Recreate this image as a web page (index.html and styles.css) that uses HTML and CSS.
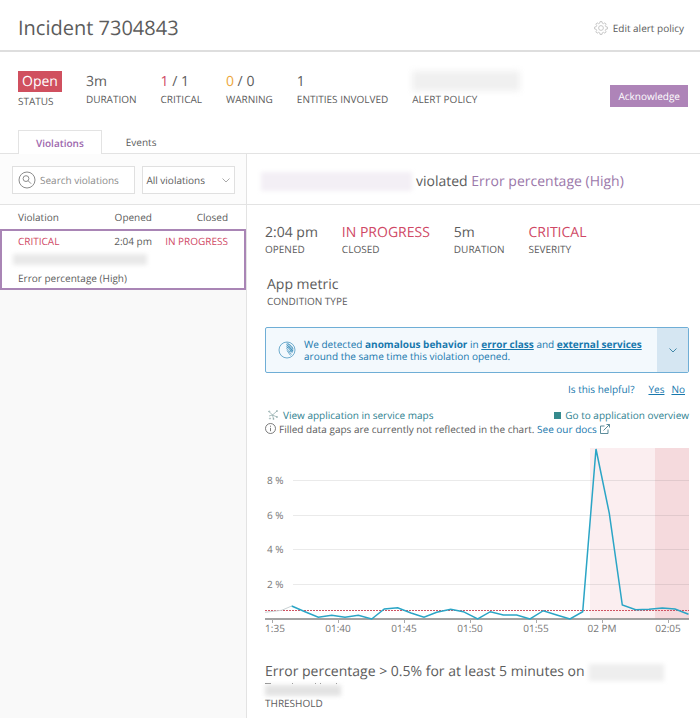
FILE: index.html
```html
<!DOCTYPE html>
<html lang="en">
<head>
<meta charset="utf-8">
<title>Incident 7304843</title>
<link rel="stylesheet" href="styles.css">
</head>
<body>
<header class="page-header">
  <h1>Incident 7304843</h1>
  <a class="edit-link" href="#">
    <svg class="gear" viewBox="0 0 14 14" aria-hidden="true"><path d="M6 .6h2l.3 1.6 1.2.5 1.4-.9 1.3 1.3-.9 1.4.5 1.2 1.6.3v2l-1.6.3-.5 1.2.9 1.4-1.3 1.3-1.4-.9-1.2.5L8 13.4H6l-.3-1.6-1.2-.5-1.4.9-1.3-1.3.9-1.4-.5-1.2L.6 8V6l1.6-.3.5-1.2-.9-1.4 1.3-1.3 1.4.9 1.2-.5z"/><circle cx="7" cy="7" r="2.4"/></svg>
    Edit alert policy
  </a>
</header>

<section class="summary">
  <dl class="stats">
    <div class="stat"><dd class="status">Open</dd><dt>STATUS</dt></div>
    <div class="stat"><dd>3m</dd><dt>DURATION</dt></div>
    <div class="stat"><dd><span class="red">1</span> / 1</dd><dt>CRITICAL</dt></div>
    <div class="stat"><dd><span class="amber">0</span> / 0</dd><dt>WARNING</dt></div>
    <div class="stat"><dd>1</dd><dt>ENTITIES INVOLVED</dt></div>
    <div class="stat"><dd><span class="redacted policy-name"></span></dd><dt>ALERT POLICY</dt></div>
  </dl>
  <button class="ack" type="button">Acknowledge</button>
</section>

<nav class="tabs">
  <a class="tab active" href="#">Violations</a>
  <a class="tab" href="#">Events</a>
</nav>

<div class="columns">
  <aside class="sidebar">
    <form class="filters">
      <label class="search">
        <svg viewBox="0 0 18 18" aria-hidden="true"><circle cx="9" cy="9" r="8"/><circle cx="8" cy="7.6" r="2.9"/><path d="M10.1 9.7l3 3"/></svg>
        <input type="text" placeholder="Search violations" aria-label="Search violations">
      </label>
      <div class="select">
        <select aria-label="Filter violations"><option>All violations</option></select>
        <svg viewBox="0 0 8 5" aria-hidden="true"><path d="M.5.5L4 4 7.500.5"/></svg>
      </div>
    </form>
    <table class="violations">
      <thead><tr><th>Violation</th><th>Opened</th><th>Closed</th></tr></thead>
      <tbody>
        <tr><td class="red">CRITICAL</td><td>2:04 pm</td><td class="red">IN PROGRESS</td></tr>
        <tr><td colspan="3" class="name-cell"><span class="redacted entity-name"></span></td></tr>
        <tr><td colspan="3" class="condition">Error percentage (High)</td></tr>
      </tbody>
    </table>
  </aside>

  <main class="detail">
    <h2><span class="redacted subject"></span><span>violated <a href="#">Error percentage (High)</a></span></h2>
    <div class="body">
      <dl class="stats">
        <div class="stat"><dd>2:04 pm</dd><dt>OPENED</dt></div>
        <div class="stat"><dd class="red">IN PROGRESS</dd><dt>CLOSED</dt></div>
        <div class="stat"><dd>5m</dd><dt>DURATION</dt></div>
        <div class="stat"><dd class="red">CRITICAL</dd><dt>SEVERITY</dt></div>
      </dl>
      <dl class="stats condition-type">
        <div class="stat"><dd>App metric</dd><dt>CONDITION TYPE</dt></div>
      </dl>

      <div class="notice">
        <svg class="radar" viewBox="0 0 18 18" aria-hidden="true"><circle cx="9" cy="9" r="8"/><path d="M8.500 3a6 6 0 0 1 6 8M8.500 5a4 4 0 0 1 4.500 6M8.500 7a2.500 2.500 0 0 1 3 4M9 1.500l6 6M8.500 3.500l6.500 6.500M8.500 5.500l6 6.500M8.500 7.500l5 6M9 9.500l3.500 5"/></svg>
        <p>We detected <b>anomalous behavior</b> in <a href="#">error class</a> and <a href="#">external services</a> around the same time this violation opened.</p>
        <button type="button" aria-label="Expand"><svg viewBox="0 0 8 5" aria-hidden="true"><path d="M.5.5L4 4 7.500.5"/></svg></button>
      </div>
      <div class="helpful"><span>Is this helpful?</span><a href="#">Yes</a><a href="#">No</a></div>

      <div class="links">
        <a href="#"><svg class="map-icon" viewBox="0 0 10 10" aria-hidden="true"><path d="M1 1.500L4.500 5 9 1M4.500 5L1 6M4.500 5l1 4M4.500 5l4.500 2"/><circle cx="1.200" cy="1.500" r=".6"/><circle cx="9" cy="1" r=".6"/><circle cx="9" cy="7" r=".6"/><circle cx="5.500" cy="9" r=".6"/><circle cx="2" cy="8.500" r=".6"/></svg>View application in service maps</a>
        <a href="#"><i class="square"></i>Go to application overview</a>
      </div>
      <p class="gap-note">
        <svg class="info" viewBox="0 0 11 11" aria-hidden="true"><circle cx="5.500" cy="5.500" r="5"/><path d="M5.500 4.800v3.400M5.500 2.700v1.100"/></svg>
        <span>Filled data gaps are currently not reflected in the chart. <a href="#">See our docs</a></span>
        <svg class="external" viewBox="0 0 10 10" aria-hidden="true"><path d="M4.500 2H.5v7.500H8V5.500M3.500 6.500l6-6M6.500.5h3v3"/></svg>
      </p>

      <svg class="chart" viewBox="0 0 424 190" role="img" aria-label="Error percentage over time">
        <rect class="band-light" x="325" y="0" width="65" height="171"/>
        <rect class="band-dark" x="390" y="0" width="34" height="171"/>
        <path class="grid" d="M28 32.500H424M28 67.500H424M28 101.500H424M28 136.500H424"/>
        <g class="ticks-y"><text x="2" y="36">8 %</text><text x="2" y="71">6 %</text><text x="2" y="105">4 %</text><text x="2" y="140">2 %</text></g>
        <path class="threshold" d="M0 162.500H424"/>
        <path class="axis" d="M0 171H424"/>
        <path class="tick" d="M7.500 171v4M73.500 171v4M139.500 171v4M205.500 171v4M271.500 171v4M337.500 171v4M403.500 171v4"/>
        <polyline class="faded" points="0,164.300 16.700,162.300 26.700,158"/>
        <polyline class="series" points="26.700,158 40,163.700 53.300,169.300 66.700,167.300 80,169.300 93.300,167.300 106.700,171 119.300,161 132.700,159.700 146,165 159,169.300 171.700,164.300 185.700,161.300 198.300,163.700 212.700,171 225.300,163.700 238.300,167 251.700,167 265,171 278.300,162.700 291.700,167 305,171 317.700,163.700 331,1 344.300,65.300 357.300,157 370.700,161.700 384,161.300 397.300,160 410,161 423.500,166.300"/>
        <g class="ticks-x"><text x="10" y="184">1:35</text><text x="73" y="184">01:40</text><text x="139" y="184">01:45</text><text x="205" y="184">01:50</text><text x="271" y="184">01:55</text><text x="337" y="184">02 PM</text><text x="403" y="184">02:05</text></g>
      </svg>

      <dl class="stats threshold-text">
        <div class="stat">
          <dd>Error percentage &gt; 0.5% for at least 5 minutes on <span class="redacted target"></span></dd>
          <dd class="second-line"><svg viewBox="0 0 75 2" aria-hidden="true"><path d="M0 .5h6M27 .5h1M50 .5h1M55 .5h1M71 .5h1"/></svg><span class="redacted target-rest"></span></dd>
          <dt>THRESHOLD</dt>
        </div>
      </dl>
    </div>
  </main>
</div>
</body>
</html>
```
FILE: styles.css
```css
* { box-sizing: border-box; }
body {
  margin: 0;
  background: #fff;
  color: #5c5c5c;
  font: 10px/16px "Open Sans", "Noto Sans", sans-serif;
  text-rendering: geometricPrecision;
}
h1, h2, p, dl, dd { margin: 0; font-weight: 400; }
a { color: inherit; text-decoration: none; }
svg { display: block; flex: none; fill: none; stroke: currentColor; }
button, input, select { font: inherit; color: inherit; text-rendering: inherit; }
.red { color: #cf4865; }
.amber { color: #eda73c; }

.page-header {
  display: flex;
  align-items: center;
  justify-content: space-between;
  padding: 14px 16px 8px 18px;
  border-bottom: 2px solid #dedede;
}
h1 { font-size: 20px; line-height: 28px; }
.edit-link { display: flex; align-items: center; gap: 5px; }
.gear { width: 14px; height: 14px; color: #bbb; stroke-width: .8; }

.summary {
  display: flex;
  align-items: flex-start;
  justify-content: space-between;
  height: 60px;
  padding: 19px 12px 0 18px;
}
.stats { display: flex; gap: 24px; }
.stat dd { font-size: 14px; line-height: 20px; }
.stat dt { line-height: 12px; }
.summary .stat dd { height: 21px; line-height: 22px; }
.summary .stat dt { line-height: 14px; }
.summary .stat:first-child dt { padding-top: 2px; }
.stat .status { padding: 0 4px; background: #d0505f; color: #fff; }
.ack {
  margin-top: 14px;
  height: 22px;
  padding: 0 8px;
  border: 0;
  background: #ae84b8;
  color: #fff;
}

.redacted { display: block; background: #e9e9e9; filter: blur(2px); }
.policy-name { width: 108px; height: 20px; background: #f0f0f0; filter: blur(3px); }

.tabs {
  display: flex;
  height: 42px;
  padding: 18px 18px 0;
  border-bottom: 1px solid #e3e3e3;
}
.tab { height: 23px; padding: 4px 24px 0; line-height: 16px; }
.tab.active {
  height: 24px;
  padding: 4px 17px 0;
  border: 1px solid #e3e3e3;
  border-bottom: 0;
  background: #fff;
  color: #9d68ad;
  font-weight: 600;
}

.columns { display: grid; grid-template-columns: 247px 1fr; min-height: 564px; }
.sidebar { background: #f9f9f9; border-right: 1px solid #e3e3e3; }
.filters {
  display: flex;
  gap: 7px;
  padding: 12px 11px 10px 12px;
  background: #fcfcfc;
  border-bottom: 1px solid #e3e3e3;
}
.search, .select {
  display: flex;
  align-items: center;
  height: 28px;
  border: 1px solid #e0e0e0;
  background: #fff;
}
.search { flex: 122; min-width: 0; padding-left: 5px; gap: 4px; }
.search svg { width: 18px; height: 18px; color: #8c8c8c; }
.search input { width: 100%; min-width: 0; padding: 0; border: 0; background: none; outline: 0; }
.search input::placeholder { color: #8c8c8c; opacity: 1; }
.select { flex: 95; min-width: 0; position: relative; }
.select select { width: 100%; height: 26px; padding: 0 3px; border: 0; background: none; appearance: none; }
.select svg { position: absolute; right: 4px; width: 8px; height: 5px; color: #aaa; pointer-events: none; }

.violations { width: 246px; border-collapse: separate; border-spacing: 0; background: #fff; table-layout: fixed; }
.violations th { height: 24px; font-weight: 400; }
.violations th, .violations td { padding: 0; text-align: right; line-height: 16px; }
.violations th:first-child, .violations td:first-child { width: 86px; padding-left: 18px; text-align: left; }
.violations th:nth-child(2) { width: 66px; }
.violations th:last-child, .violations tr:first-child td:last-child { padding-right: 18px; }
.violations tbody { outline: 2px solid #a985b5; outline-offset: -2px; }
.violations tbody tr:first-child td { height: 24px; }
.violations tbody td.name-cell { height: 13px; padding-left: 13px; }
.entity-name { width: 134px; height: 11px; }
.violations td.condition { height: 24px; }

.detail h2 {
  display: flex;
  align-items: center;
  gap: 4px;
  height: 51px;
  padding: 5px 12px 0 14px;
  border-bottom: 1px solid #e3e3e3;
  font-size: 14px;
}
.detail h2 a { color: #9b78aa; }
.subject { width: 151px; height: 19px; background: #f3eff5; }
.body { padding: 18px 11px 12px 18px; }
.condition-type { padding: 20px 0 0 2px; }

.notice {
  display: flex;
  align-items: center;
  min-height: 46px;
  margin-top: 20px;
  border: 1px solid #6faed6;
  border-radius: 2px;
  background: #f3f9fd;
  color: #1878ad;
}
.radar { width: 18px; height: 18px; margin: 0 8px 0 12px; stroke-width: .6; }
.notice p { flex: 1; line-height: 12px; padding-right: 8px; }
.notice p a { font-weight: 700; text-decoration: underline; }
.notice button {
  display: grid;
  place-items: center;
  align-self: stretch;
  width: 31px;
  border: 0;
  background: #d5e6f2;
  color: #4288a8;
}
.notice button svg { width: 8px; height: 5px; }
.helpful { display: flex; justify-content: flex-end; gap: 7px; padding: 8px 4px 0 0; color: #1878ad; }
.helpful span { margin-right: 7px; }
.helpful a { text-decoration: underline; }
.links { display: flex; justify-content: space-between; margin-top: 10px; color: #2e8190; }
.links a { display: flex; align-items: center; }
.map-icon { width: 10px; height: 10px; margin: 0 5px 0 3px; color: #8aa6a6; stroke-width: .7; }
.square { width: 7px; height: 7px; margin-right: 4px; background: #358a8d; }
.gap-note { display: flex; align-items: center; gap: 3px; line-height: 10px; }
.gap-note a { color: #1878ad; }
.info { width: 11px; height: 11px; stroke-width: .8; }
.external { width: 10px; height: 10px; color: #4b8090; stroke-width: .9; }

.chart { width: 100%; margin-top: 14px; overflow: visible; }
.chart text { fill: #777; stroke: none; font-size: 10px; }
.ticks-x { text-anchor: middle; }
.band-light { fill: #fbeef0; stroke: none; }
.band-dark { fill: #f5dadd; stroke: none; }
.grid { stroke: #5c5c5c; stroke-opacity: .13; }
.axis { stroke: #858585; stroke-width: 1.5; }
.tick { stroke: #aaa; }
.threshold { stroke: #cf5262; stroke-dasharray: 2 1; }
.series { stroke: #2ba5c6; stroke-width: 1.5; }
.faded { stroke: #c9d2d4; }

.threshold-text { margin-top: 24px; }
.threshold-text dd:first-child { display: flex; align-items: center; gap: 4px; }
.target { width: 75px; height: 17px; background: #eee; }
.second-line svg { width: 75px; height: 2px; color: #888; }
.threshold-text .second-line { padding: 1px 0; }
.target-rest { width: 76px; height: 11px; background: #e3e3e3; }
```
